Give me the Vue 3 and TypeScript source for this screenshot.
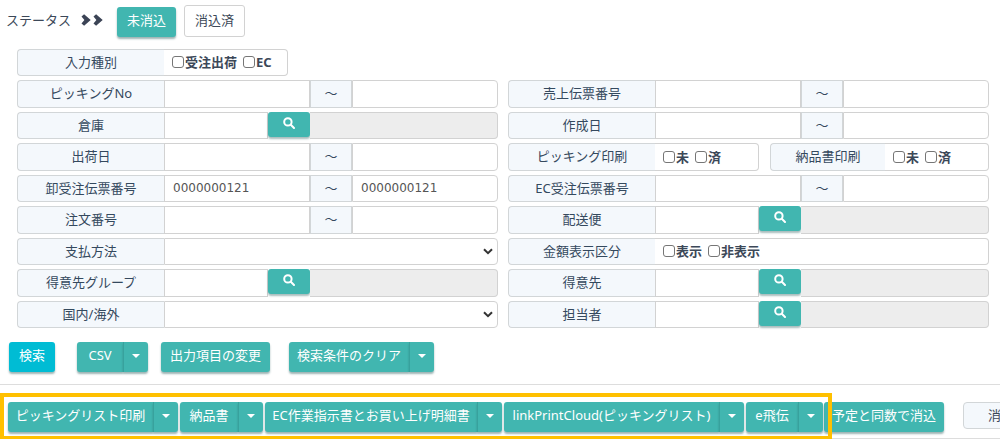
<script setup lang="ts">
import { ref } from 'vue'

interface Field {
  id: string
  label: string
  kind: 'range' | 'lookup' | 'select' | 'checks' | 'pair'
  options?: string[]
}

const leftFields: Field[] = [
  { id: 'picking', label: 'ピッキングNo', kind: 'range' },
  { id: 'warehouse', label: '倉庫', kind: 'lookup' },
  { id: 'shipdate', label: '出荷日', kind: 'range' },
  { id: 'wholesale', label: '卸受注伝票番号', kind: 'range' },
  { id: 'order', label: '注文番号', kind: 'range' },
  { id: 'payment', label: '支払方法', kind: 'select' },
  { id: 'group', label: '得意先グループ', kind: 'lookup' },
  { id: 'region', label: '国内/海外', kind: 'select' },
]

const rightFields: Field[] = [
  { id: 'sales', label: '売上伝票番号', kind: 'range' },
  { id: 'created', label: '作成日', kind: 'range' },
  { id: 'printed', label: 'ピッキング印刷', kind: 'pair', options: ['未', '済'] },
  { id: 'ecorder', label: 'EC受注伝票番号', kind: 'range' },
  { id: 'delivery', label: '配送便', kind: 'lookup' },
  { id: 'amount', label: '金額表示区分', kind: 'checks', options: ['表示', '非表示'] },
  { id: 'customer', label: '得意先', kind: 'lookup' },
  { id: 'staff', label: '担当者', kind: 'lookup' },
]

const columns = [leftFields, rightFields]

const values = ref<Record<string, string>>({
  'wholesale-from': '0000000121',
  'wholesale-to': '0000000121',
})

const outputs = [
  'ピッキングリスト印刷',
  '納品書',
  'EC作業指示書とお買い上げ明細書',
  'linkPrintCloud(ピッキングリスト)',
  'e飛伝',
]
</script>

<template>
  <main class="page">
    <header class="status">
      <span class="status-label">ステータス</span>
      <svg class="chevrons" viewBox="0 0 22 12" aria-hidden="true">
        <path d="M.5 2.6 3.1.2 9.7 6l-6.6 5.8L.5 9.4 3.4 6z" />
        <path d="M12.5 2.6 15.1.2 21.7 6l-6.6 5.8-2.6-2.4L15.4 6z" />
      </svg>
      <button type="button" class="btn">未消込</button>
      <button type="button" class="btn-outline">消込済</button>
    </header>

    <form class="search" @submit.prevent>
      <div class="row row-type" role="group" aria-labelledby="type-label">
        <span id="type-label" class="tag">入力種別</span>
        <span class="checks">
          <label><input type="checkbox" />受注出荷</label>
          <label><input type="checkbox" />EC</label>
        </span>
      </div>

      <div class="columns">
        <div v-for="(fields, c) in columns" :key="c" class="column">
          <template v-for="f in fields" :key="f.id">
            <div v-if="f.kind === 'range'" class="row range">
              <label class="tag" :for="f.id + '-from'">{{ f.label }}</label>
              <input :id="f.id + '-from'" v-model="values[f.id + '-from']" class="box" type="text" />
              <span class="tilde">～</span>
              <input v-model="values[f.id + '-to']" class="box last" type="text" :aria-label="f.label" />
            </div>

            <div v-else-if="f.kind === 'lookup'" class="row lookup">
              <label class="tag" :for="f.id">{{ f.label }}</label>
              <input :id="f.id" class="box" type="text" />
              <button type="button" class="find" :aria-label="f.label">
                <svg viewBox="0 0 12 12" aria-hidden="true">
                  <circle cx="4.9" cy="4.9" r="3.7" />
                  <path d="M7.8 7.8 11 11" />
                </svg>
              </button>
              <input class="box last" type="text" disabled :aria-label="f.label" />
            </div>

            <div v-else-if="f.kind === 'select'" class="row choice">
              <label class="tag" :for="f.id">{{ f.label }}</label>
              <span class="select-wrap">
                <select :id="f.id" class="box last"><option></option></select>
                <svg viewBox="0 0 10 7" aria-hidden="true"><path d="M1 1.2 5 5.2 9 1.2" /></svg>
              </span>
            </div>

            <div v-else-if="f.kind === 'checks'" class="row choice" role="group" :aria-labelledby="f.id">
              <span :id="f.id" class="tag">{{ f.label }}</span>
              <span class="checks">
                <label v-for="o in f.options" :key="o"><input type="checkbox" />{{ o }}</label>
              </span>
            </div>

            <div v-else class="pair">
              <div class="row choice" role="group" :aria-labelledby="f.id">
                <span :id="f.id" class="tag">{{ f.label }}</span>
                <span class="checks">
                  <label v-for="o in f.options" :key="o"><input type="checkbox" />{{ o }}</label>
                </span>
              </div>
              <div class="row choice narrow" role="group" aria-labelledby="slip">
                <span id="slip" class="tag">納品書印刷</span>
                <span class="checks">
                  <label v-for="o in f.options" :key="o"><input type="checkbox" />{{ o }}</label>
                </span>
              </div>
            </div>
          </template>
        </div>
      </div>

      <div class="actions">
        <button type="submit" class="btn primary">検索</button>
        <span class="split csv">
          <button type="button" class="btn">CSV</button>
          <button type="button" class="btn caret" aria-label="CSV"><i></i></button>
        </span>
        <button type="button" class="btn change">出力項目の変更</button>
        <span class="split clear">
          <button type="button" class="btn">検索条件のクリア</button>
          <button type="button" class="btn caret" aria-label="検索条件のクリア"><i></i></button>
        </span>
      </div>
    </form>

    <footer class="toolbar">
      <div class="outputs">
        <span v-for="o in outputs" :key="o" class="split">
          <button type="button" class="btn">{{ o }}</button>
          <button type="button" class="btn caret" :aria-label="o"><i></i></button>
        </span>
      </div>
      <button type="button" class="btn same">予定と同数で消込</button>
      <span class="clearing">消込</span>
    </footer>
  </main>
</template>

<style>
body {
  margin: 0;
  background: #fff;
}
</style>

<style scoped>
.page {
  overflow: hidden;
  color: #3c4858;
  font: 13px/20px "Noto Sans", "Noto Sans CJK JP", sans-serif;
}
.page * {
  box-sizing: border-box;
}
button,
input,
select {
  margin: 0;
  font: inherit;
}
.status {
  display: flex;
  align-items: flex-end;
  padding: 5px 6px 12px;
}
.status-label {
  align-self: center;
  width: 75px;
  padding-bottom: 2px;
  white-space: nowrap;
}
.chevrons {
  align-self: center;
  width: 22px;
  height: 12px;
  margin-right: 14px;
  margin-bottom: 3px;
  fill: #3c4456;
}
.btn {
  display: block;
  height: 30px;
  padding: 0 10px 4px;
  border: 0;
  border-radius: 3px;
  background: #41b6b0;
  box-shadow: 0 2px 2px rgba(40, 90, 90, 0.45);
  color: #fff;
  line-height: 26px;
  white-space: nowrap;
}
.btn-outline {
  height: 32px;
  margin-left: 8px;
  padding: 0 10px 2px;
  border: 1px solid #d2d2d2;
  border-radius: 3px;
  background: #fff;
  color: #3c4858;
}
.search {
  border-bottom: 1px solid #ddd;
  padding-bottom: 12px;
}
.row {
  display: grid;
  min-width: 0;
}
.row-type {
  grid-template-columns: 147px 124px;
  height: 27px;
  margin: 0 17px 4px;
}
.columns {
  display: grid;
  grid-template-columns: 1fr 1fr;
  gap: 10px;
  margin: 0 11px 0 17px;
}
.column {
  display: grid;
  gap: 4px;
  min-width: 0;
}
.column > * {
  height: 27px;
}
.column > :nth-child(odd) {
  height: 28px;
}
.range {
  grid-template-columns: 147px 1fr 42px 1fr;
}
.lookup {
  grid-template-columns: 147px 104px 42px 1fr;
}
.choice {
  grid-template-columns: 147px 1fr;
}
.pair {
  display: grid;
  grid-template-columns: 251px 1fr;
  gap: 11px;
}
.narrow {
  grid-template-columns: 115px 1fr;
}
.tag,
.tilde {
  border: 1px solid #d2d6d8;
  background: #f4f8fc;
  color: #34495e;
  line-height: 24px;
  text-align: center;
  white-space: nowrap;
}
.tag {
  border-right: 0;
  border-radius: 4px 0 0 4px;
}
.box {
  width: 100%;
  min-width: 0;
  height: 100%;
  padding: 0 8px 2px;
  border: 1px solid #d2d2d2;
  border-radius: 0;
  background: #fff;
  color: #555;
  font: 12px "DejaVu Sans", sans-serif;
  appearance: none;
}
.box:disabled {
  border-left: 0;
  background: #ededed;
}
.last {
  border-radius: 0 4px 4px 0;
}
.find {
  display: flex;
  align-items: flex-start;
  justify-content: center;
  height: 25px;
  padding: 5px 0 0;
  border: 0;
  border-radius: 3px;
  background: #41b6b0;
  box-shadow: 0 2px 2px rgba(40, 90, 90, 0.4);
}
.find svg {
  width: 12px;
  height: 12px;
  fill: none;
  stroke: #fff;
  stroke-width: 2;
  stroke-linecap: round;
}
.select-wrap {
  position: relative;
}
.select-wrap svg {
  position: absolute;
  top: 10px;
  right: 5px;
  width: 10px;
  height: 7px;
  fill: none;
  stroke: #333;
  stroke-width: 2;
  pointer-events: none;
}
.checks {
  display: flex;
  gap: 6px;
  padding-left: 8px;
  border: 1px solid #d2d2d2;
  border-left: 0;
  border-radius: 0 4px 4px 0;
  font-weight: 700;
}
.checks label {
  display: flex;
  align-items: center;
  gap: 1px;
  padding-bottom: 1px;
  line-height: 22px;
  white-space: nowrap;
}
.checks input {
  width: 12px;
  height: 12px;
  border: 1px solid #767676;
  border-radius: 3px;
  background: #fff;
  appearance: none;
}
.checks input:checked {
  background: #41b6b0;
}
.actions {
  display: flex;
  align-items: flex-start;
  padding: 14px 9px 0;
}
.primary {
  background: #00bcd4;
}
.split {
  display: grid;
  grid-template-columns: 1fr 25px;
}
.split .btn {
  padding-right: 0;
  padding-left: 0;
}
.split .btn:first-child {
  border-radius: 3px 0 0 3px;
}
.split .caret {
  display: flex;
  align-items: center;
  justify-content: center;
  padding-bottom: 2px;
  border-left: 1px solid #37a29d;
  border-radius: 0 3px 3px 0;
}
.caret i {
  border: 4px solid transparent;
  border-top-color: #fff;
  border-bottom: 0;
}
.csv {
  width: 71px;
  margin-left: 22px;
}
.change {
  width: 109px;
  margin-left: 13px;
  padding-right: 0;
  padding-left: 0;
}
.clear {
  width: 145px;
  margin-left: 19px;
}
.toolbar {
  display: flex;
  align-items: flex-start;
  padding: 17px 0 6px 8px;
  border-bottom: 1px solid #ddd;
}
.outputs {
  position: relative;
  display: grid;
  flex: none;
  grid-template-columns: 170px 83px 237px 240px 77px;
  gap: 2px;
}
.outputs::after {
  position: absolute;
  z-index: 1;
  inset: -9px -9px -8px -8px;
  border: 4px solid #ffc000;
  content: "";
  pointer-events: none;
}
.same {
  flex: none;
  width: 120px;
  margin-left: 1px;
  padding-right: 0;
  padding-left: 0;
}
.clearing {
  flex: none;
  width: 76px;
  height: 27px;
  margin-left: 19px;
  border: 1px solid #d2d6d8;
  border-radius: 4px 0 0 4px;
  background: #f4f8fc;
  line-height: 24px;
  text-align: center;
}
</style>
